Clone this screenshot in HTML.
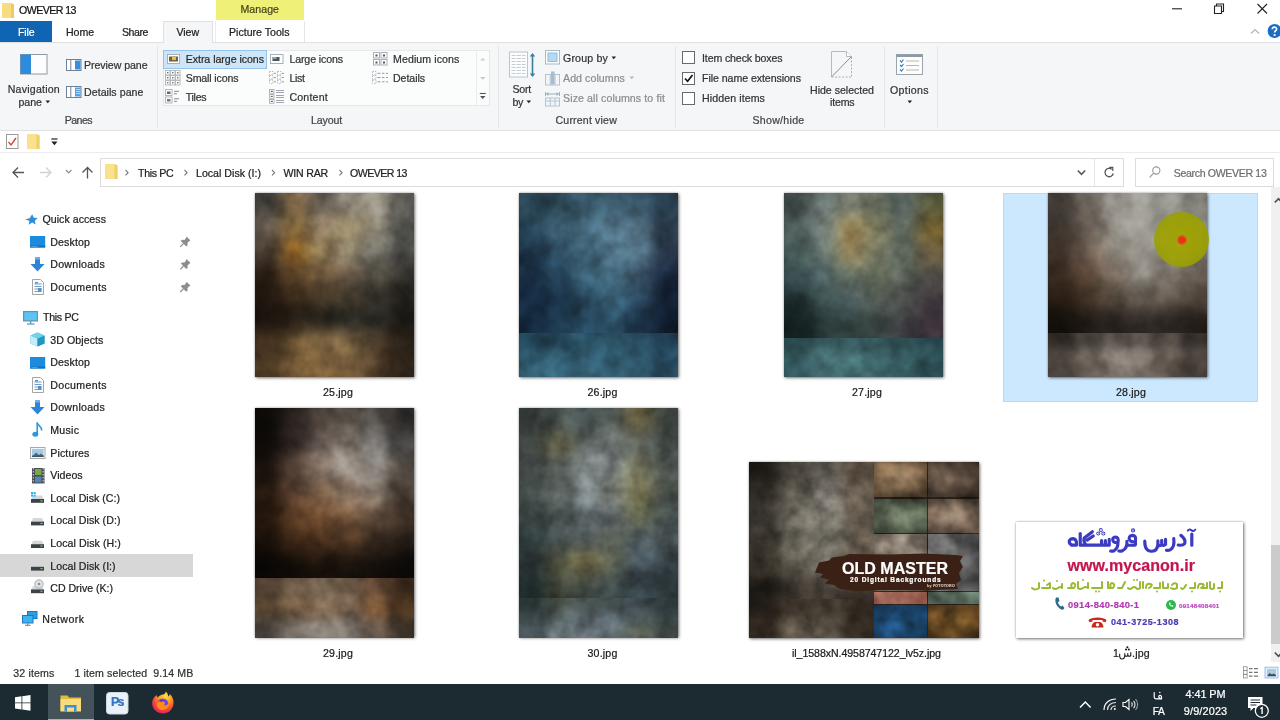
<!DOCTYPE html>
<html>
<head>
<meta charset="utf-8">
<title>OWEVER 13</title>
<style>
*{box-sizing:border-box;margin:0;padding:0}
html,body{width:1280px;height:720px;overflow:hidden;background:#fff}
body{font-family:"Liberation Sans",sans-serif;font-size:11px;color:#222;position:relative}
.a{position:absolute}
.t{position:absolute;white-space:pre;line-height:14px;height:14px;font-family:"Liberation Sans",sans-serif;-webkit-text-stroke:.22px currentColor}
svg{position:absolute;overflow:visible}
.th{position:absolute;overflow:hidden;background:#444}
.th i{position:absolute;display:block;border-radius:50%;filter:blur(6px)}
.sh{position:absolute;box-shadow:1px 1px 3px rgba(0,0,0,.5),0 0 2px rgba(0,0,0,.25)}
</style>
</head>
<body>
<svg width="0" height="0" style="left:0;top:0"><defs>
<filter id="n1" x="0" y="0" width="100%" height="100%" color-interpolation-filters="sRGB"><feTurbulence type="fractalNoise" baseFrequency="0.05 0.045" numOctaves="3" seed="3"/><feColorMatrix type="matrix" values="1.300 0 0 0 -0.15  1.300 0 0 0 -0.15  1.300 0 0 0 -0.15  0 0 0 0 1"/></filter>
<filter id="n2" x="0" y="0" width="100%" height="100%" color-interpolation-filters="sRGB"><feTurbulence type="fractalNoise" baseFrequency="0.045 0.04" numOctaves="3" seed="11"/><feColorMatrix type="matrix" values="1.300 0 0 0 -0.15  1.300 0 0 0 -0.15  1.300 0 0 0 -0.15  0 0 0 0 1"/></filter>
<filter id="n3" x="0" y="0" width="100%" height="100%" color-interpolation-filters="sRGB"><feTurbulence type="fractalNoise" baseFrequency="0.05 0.05" numOctaves="3" seed="7"/><feColorMatrix type="matrix" values="1.300 0 0 0 -0.15  1.300 0 0 0 -0.15  1.300 0 0 0 -0.15  0 0 0 0 1"/></filter>
<filter id="n4" x="0" y="0" width="100%" height="100%" color-interpolation-filters="sRGB"><feTurbulence type="fractalNoise" baseFrequency="0.05 0.045" numOctaves="3" seed="21"/><feColorMatrix type="matrix" values="1.300 0 0 0 -0.15  1.300 0 0 0 -0.15  1.300 0 0 0 -0.15  0 0 0 0 1"/></filter>
<filter id="n5" x="0" y="0" width="100%" height="100%" color-interpolation-filters="sRGB"><feTurbulence type="fractalNoise" baseFrequency="0.045 0.045" numOctaves="3" seed="5"/><feColorMatrix type="matrix" values="1.300 0 0 0 -0.15  1.300 0 0 0 -0.15  1.300 0 0 0 -0.15  0 0 0 0 1"/></filter>
<filter id="n6" x="0" y="0" width="100%" height="100%" color-interpolation-filters="sRGB"><feTurbulence type="fractalNoise" baseFrequency="0.05 0.05" numOctaves="3" seed="17"/><feColorMatrix type="matrix" values="1.300 0 0 0 -0.15  1.300 0 0 0 -0.15  1.300 0 0 0 -0.15  0 0 0 0 1"/></filter>
<filter id="n7" x="0" y="0" width="100%" height="100%" color-interpolation-filters="sRGB"><feTurbulence type="fractalNoise" baseFrequency="0.06 0.06" numOctaves="3" seed="9"/><feColorMatrix type="matrix" values="1.300 0 0 0 -0.15  1.300 0 0 0 -0.15  1.300 0 0 0 -0.15  0 0 0 0 1"/></filter>
</defs></svg>
<!-- ===== TITLE BAR ===== -->
<div class="a" style="left:216px;top:0;width:88px;height:20px;background:#eef077"></div>
<svg style="left:2px;top:3px" width="12" height="15" viewBox="0 0 12 15"><path d="M0 0h9l3 1.5V15H0z" fill="#f7dc82"/><path d="M9 0l3 1.5V15H9z" fill="#efcb5e"/></svg>
<div class="t" style="left:19.0px;top:3.13px;font-size:10.6px;letter-spacing:-0.539px;color:#111;">OWEVER 13</div>
<div class="t" style="left:240.5px;top:1.53px;font-size:10.6px;letter-spacing:0.032px;color:#47471e;">Manage</div>
<!-- window buttons -->
<svg style="left:1171px;top:0" width="110" height="21" viewBox="0 0 110 21" fill="none" stroke="#222" stroke-width="1.1">
<path d="M1 8.8h10"/>
<path d="M43.5 6h7v7.5h-7z"/><path d="M45.5 6V4h7v7.5h-2"/>
<path d="M86.5 4l9.5 9.5M96 4l-9.500 9.500"/>
</svg>
<!-- ===== TABS ===== -->
<div class="a" style="left:0;top:21px;width:52px;height:21px;background:#0f65b4"></div>
<div class="t" style="left:18.0px;top:24.83px;font-size:10.6px;letter-spacing:-0.145px;color:#fff;">File</div>
<div class="t" style="left:66.0px;top:24.83px;font-size:10.6px;letter-spacing:-0.069px;color:#222;">Home</div>
<div class="t" style="left:122.0px;top:24.83px;font-size:10.6px;letter-spacing:-0.457px;color:#222;">Share</div>
<!-- ribbon body -->
<div class="a" style="left:0;top:42px;width:1280px;height:89px;background:#f5f6f7;border-top:1px solid #dfe0e1;border-bottom:1px solid #dfe0e1"></div>
<div class="a" style="left:163px;top:21px;width:50px;height:22px;background:#f5f6f7;border:1px solid #dfe0e1;border-bottom:none"></div>
<div class="t" style="left:176.5px;top:24.83px;font-size:10.6px;letter-spacing:-0.071px;color:#222;">View</div>
<div class="a" style="left:304px;top:21px;width:1px;height:21px;background:#e6e6e6"></div>
<div class="a" style="left:215px;top:21px;width:1px;height:21px;background:#ececec"></div>
<div class="t" style="left:229.0px;top:24.83px;font-size:10.6px;letter-spacing:0.001px;color:#222;">Picture Tools</div>
<!-- collapse ^ and help -->
<svg style="left:1250px;top:24px" width="30" height="16" viewBox="0 0 30 16"><path d="M1 9.5l4-4 4 4" fill="none" stroke="#b5b5b5" stroke-width="1.2"/><circle cx="24.600" cy="7" r="7" fill="#1a6dc2"/><path d="M22.300 5.200c0-2.800 4.400-2.600 4.300-.2 0 1.600-2 1.700-2 3.500" fill="none" stroke="#fff" stroke-width="1.700"/><circle cx="24.600" cy="11" r="1.100" fill="#fff"/></svg>
<!-- ribbon separators -->
<div class="a" style="left:157px;top:46px;width:1px;height:82px;background:#e4e5e6"></div>
<div class="a" style="left:498px;top:46px;width:1px;height:82px;background:#e4e5e6"></div>
<div class="a" style="left:675px;top:46px;width:1px;height:82px;background:#e4e5e6"></div>
<div class="a" style="left:884px;top:46px;width:1px;height:82px;background:#e4e5e6"></div>
<div class="a" style="left:937px;top:46px;width:1px;height:82px;background:#e4e5e6"></div>
<!-- ===== QAT ===== -->
<div class="a" style="left:0;top:131px;width:1280px;height:22px;background:#fff;border-bottom:1px solid #ececec"></div>
<!-- ===== RIBBON: PANES ===== -->
<svg style="left:20px;top:54px" width="28" height="21" viewBox="0 0 28 21"><rect x="0.500" y="0.500" width="26.500" height="19.500" fill="#fdfdfd" stroke="#8b98a6"/><rect x="0.500" y="0.500" width="10.500" height="19.500" fill="#2e8ada"/></svg>
<div class="t" style="left:7.7px;top:82.13px;font-size:10.6px;letter-spacing:0.221px;color:#333;">Navigation</div>
<div class="t" style="left:18.5px;top:94.53px;font-size:10.6px;letter-spacing:-0.020px;color:#333;">pane</div>
<svg style="left:45px;top:100px" width="6" height="4" viewBox="0 0 6 4"><path d="M0.500 0.500h4.600L2.800 3.200z" fill="#222"/></svg>
<svg style="left:66px;top:59px" width="16" height="12" viewBox="0 0 16 12"><rect x="0.500" y="0.500" width="14.500" height="11" fill="#fff" stroke="#6f8295"/><rect x="9" y="1.500" width="5.500" height="9" fill="#3a8fdc"/><path d="M4.800 1v10" stroke="#6f8295"/></svg>
<div class="t" style="left:84.0px;top:57.73px;font-size:10.6px;letter-spacing:-0.061px;color:#333;">Preview pane</div>
<svg style="left:66px;top:86px" width="16" height="12" viewBox="0 0 16 12"><rect x="0.500" y="0.500" width="14.500" height="11" fill="#fff" stroke="#6f8295"/><rect x="9" y="1.500" width="5.500" height="9" fill="#5aa0e0"/><path d="M4.800 1v10" stroke="#6f8295"/><path d="M10 3.500h4M10 5.500h4M10 7.500h4" stroke="#d8e8f8" stroke-width=".8"/></svg>
<div class="t" style="left:84.0px;top:84.83px;font-size:10.6px;letter-spacing:0.048px;color:#333;">Details pane</div>
<div class="t" style="left:64.7px;top:113.03px;font-size:10.6px;letter-spacing:-0.551px;color:#444;">Panes</div>
<!-- ===== RIBBON: LAYOUT ===== -->
<div class="a" style="left:163px;top:50px;width:327px;height:56px;background:#fbfcfc;border:1px solid #e6e7e8"></div>
<div class="a" style="left:476px;top:51px;width:1px;height:54px;background:#ececec"></div>
<div class="a" style="left:163px;top:50px;width:104px;height:19px;background:#cde5f7;border:1px solid #94c3ea"></div>
<!-- gallery icons -->
<svg style="left:167px;top:54px" width="13" height="10" viewBox="0 0 13 10"><rect x="0.500" y="0.500" width="12" height="9" fill="#fff" stroke="#a8b0b8"/><rect x="2" y="2.500" width="9" height="5" fill="#6a6440"/><rect x="5" y="3" width="4" height="3" fill="#e8c040"/></svg>
<svg style="left:270px;top:54px" width="14" height="10" viewBox="0 0 14 10"><rect x="0.500" y="0.500" width="12.500" height="9" fill="#fff" stroke="#a8b0b8"/><rect x="2.500" y="3" width="7" height="4" fill="#4a5560"/><rect x="2.500" y="3" width="4" height="2" fill="#8aa"/></svg>
<svg style="left:373px;top:52px" width="15" height="14" viewBox="0 0 15 14"><g fill="#fff" stroke="#a8b0b8"><rect x="0.500" y="0.500" width="6" height="5.500"/><rect x="8" y="0.500" width="6" height="5.500"/><rect x="0.500" y="7.500" width="6" height="5.500"/><rect x="8" y="7.500" width="6" height="5.500"/></g><g fill="#555"><rect x="2.500" y="2.500" width="2" height="2"/><rect x="10" y="2.500" width="2" height="2"/><rect x="2.500" y="9.500" width="2" height="2"/><rect x="10" y="9.500" width="2" height="2"/></g></svg>
<svg style="left:165px;top:70px" width="16" height="16" viewBox="0 0 16 16"><g fill="#fff" stroke="#b0b6bc" stroke-width=".9"><rect x="0.500" y="0.500" width="4.500" height="4.500"/><rect x="5.500" y="0.500" width="4.500" height="4.500"/><rect x="10.500" y="0.500" width="4.500" height="4.500"/><rect x="0.500" y="5.500" width="4.500" height="4.500"/><rect x="5.500" y="5.500" width="4.500" height="4.500"/><rect x="10.500" y="5.500" width="4.500" height="4.500"/><rect x="0.500" y="10.500" width="4.500" height="4.500"/><rect x="5.500" y="10.500" width="4.500" height="4.500"/><rect x="10.500" y="10.500" width="4.500" height="4.500"/></g><g fill="#555"><circle cx="2.800" cy="2.800" r=".8"/><circle cx="7.800" cy="2.800" r=".8"/><circle cx="12.800" cy="2.800" r=".8"/><circle cx="2.800" cy="7.800" r=".8"/><circle cx="7.800" cy="7.800" r=".8"/><circle cx="12.800" cy="7.800" r=".8"/><circle cx="2.800" cy="12.800" r=".8"/><circle cx="7.800" cy="12.800" r=".8"/><circle cx="12.800" cy="12.800" r=".8"/></g></svg>
<svg style="left:269px;top:71px" width="16" height="13" viewBox="0 0 16 13"><g fill="#fff" stroke="#b0b6bc" stroke-width=".9" stroke-dasharray="1.500 1"><rect x="0.500" y="0.500" width="3.500" height="3.500"/><rect x="0.500" y="4.700" width="3.500" height="3.500"/><rect x="0.500" y="9" width="3.500" height="3.500"/><rect x="8.500" y="0.500" width="3.500" height="3.500"/><rect x="8.500" y="4.700" width="3.500" height="3.500"/><rect x="8.500" y="9" width="3.500" height="3.500"/></g><path d="M5 2.300h2M5 6.500h2M5 10.800h2M13 2.300h2M13 6.500h2M13 10.800h2" stroke="#999"/></svg>
<svg style="left:372px;top:71px" width="16" height="13" viewBox="0 0 16 13"><g fill="#fff" stroke="#b0b6bc" stroke-width=".9" stroke-dasharray="1.500 1"><rect x="0.500" y="0.500" width="3.500" height="3.500"/><rect x="0.500" y="4.700" width="3.500" height="3.500"/><rect x="0.500" y="9" width="3.500" height="3.500"/></g><path d="M5.500 2.300h3M10 2.300h2.500M14 2.300h2M5.500 6.500h3M10 6.500h2.500M14 6.500h2M5.500 10.800h3M10 10.800h2.500M14 10.800h2" stroke="#999"/></svg>
<svg style="left:165px;top:89px" width="16" height="15" viewBox="0 0 16 15"><g fill="#fff" stroke="#a8b0b8" stroke-width=".9"><rect x="0.500" y="0.500" width="6.500" height="6"/><rect x="0.500" y="8" width="6.500" height="6"/></g><rect x="2" y="2.500" width="3.500" height="2.500" fill="#667"/><rect x="2" y="10" width="3.500" height="2.500" fill="#685"/><path d="M9 2.300h5M9 4.800h3M9 9.800h5M9 12.300h3" stroke="#889"/></svg>
<svg style="left:269px;top:89px" width="16" height="15" viewBox="0 0 16 15"><g fill="#fff" stroke="#a8b0b8" stroke-width=".9"><rect x="0.500" y="0.500" width="4.500" height="3.800"/><rect x="0.500" y="5.500" width="4.500" height="3.800"/><rect x="0.500" y="10.500" width="4.500" height="3.800"/></g><g fill="#666"><rect x="1.800" y="1.800" width="2" height="1.200"/><rect x="1.800" y="6.800" width="2" height="1.200"/><rect x="1.800" y="11.800" width="2" height="1.200"/></g><path d="M7 1.500h8M7 3.500h8M7 6.500h8M7 8.500h8M7 11.500h8M7 13.500h8" stroke="#99a" stroke-width=".9"/></svg>
<div class="t" style="left:185.7px;top:52.13px;font-size:10.6px;letter-spacing:-0.038px;color:#2a2a2a;">Extra large icons</div>
<div class="t" style="left:185.7px;top:71.03px;font-size:10.6px;letter-spacing:-0.127px;color:#333;">Small icons</div>
<div class="t" style="left:185.7px;top:89.63px;font-size:10.6px;letter-spacing:-0.258px;color:#333;">Tiles</div>
<div class="t" style="left:289.4px;top:52.13px;font-size:10.6px;letter-spacing:-0.109px;color:#333;">Large icons</div>
<div class="t" style="left:289.4px;top:71.03px;font-size:10.6px;letter-spacing:-0.349px;color:#333;">List</div>
<div class="t" style="left:289.4px;top:89.63px;font-size:10.6px;letter-spacing:0.211px;color:#333;">Content</div>
<div class="t" style="left:393.0px;top:52.13px;font-size:10.6px;letter-spacing:0.092px;color:#333;">Medium icons</div>
<div class="t" style="left:393.0px;top:71.03px;font-size:10.6px;letter-spacing:-0.057px;color:#333;">Details</div>
<div class="t" style="left:311.0px;top:113.23px;font-size:10.6px;letter-spacing:-0.138px;color:#444;">Layout</div>
<!-- gallery scroll arrows -->
<svg style="left:479px;top:55px" width="8" height="46" viewBox="0 0 8 46"><path d="M1 5.500h5.500L3.700 2.800z" fill="#d0d0d0"/><path d="M1 22h5.500L3.700 24.800z" fill="#c8c8c8"/><path d="M0.800 38.500h6" stroke="#555" stroke-width="1.100"/><path d="M1 41h5.500L3.700 44z" fill="#555"/></svg>
<!-- ===== RIBBON: CURRENT VIEW ===== -->
<svg style="left:509px;top:51px" width="28" height="28" viewBox="0 0 28 28"><rect x="0.500" y="1" width="18" height="25" fill="#fdfdfd" stroke="#b8c4ce"/><path d="M2.500 4.500h14M2.500 7.500h14M2.500 10.500h14M2.500 13.500h14M2.500 16.500h14M2.500 19.500h14M2.500 22.500h14" stroke="#c3cdd5" stroke-width="1.200"/><path d="M7 2v23M12.500 2v23" stroke="#fdfdfd" stroke-width="1"/><path d="M23.500 3.500v21" stroke="#3b7f9c" stroke-width="1.600"/><path d="M20.800 5.500l2.700-3.500 2.700 3.500zM20.800 22.500l2.700 3.500 2.700-3.500z" fill="#3b7f9c"/></svg>
<div class="t" style="left:512.5px;top:82.13px;font-size:10.6px;letter-spacing:-0.235px;color:#333;">Sort</div>
<div class="t" style="left:512.5px;top:94.53px;font-size:10.6px;letter-spacing:-0.348px;color:#333;">by</div>
<svg style="left:526px;top:100px" width="6" height="4" viewBox="0 0 6 4"><path d="M0.500 0.500h4.600L2.800 3.200z" fill="#222"/></svg>
<svg style="left:545px;top:50px" width="16" height="15" viewBox="0 0 16 15"><rect x="0.500" y="0.500" width="14" height="13.500" fill="#fdfdfd" stroke="#a9b9c6"/><rect x="3" y="3" width="9" height="8.500" fill="#b5d9f1" stroke="#8dbfe0"/></svg>
<div class="t" style="left:563.0px;top:50.53px;font-size:10.6px;letter-spacing:0.175px;color:#333;">Group by</div>
<svg style="left:611px;top:56px" width="6" height="4" viewBox="0 0 6 4"><path d="M0.500 0.500h4.600L2.800 3.200z" fill="#222"/></svg>
<svg style="left:545px;top:71px" width="16" height="15" viewBox="0 0 16 15"><rect x="0.500" y="3.500" width="14" height="10.500" fill="#f3f6f9" stroke="#b4c3d0"/><path d="M5.200 3.500v10.500M10 3.500v10.500" stroke="#b4c3d0"/><rect x="6" y="0.500" width="3.500" height="13" fill="#a8bccd"/></svg>
<div class="t" style="left:563.0px;top:70.63px;font-size:10.6px;letter-spacing:0.066px;color:#8d8d8d;">Add columns</div>
<svg style="left:629px;top:76px" width="6" height="4" viewBox="0 0 6 4"><path d="M0.500 0.500h4.600L2.800 3.200z" fill="#b5b5b5"/></svg>
<svg style="left:545px;top:91px" width="16" height="16" viewBox="0 0 16 16"><path d="M0.500 1v4M14.500 1v4M1.500 3h12" stroke="#9cb0c2" fill="none"/><path d="M1 3l2.500-2v4zM14 3l-2.500-2v4z" fill="#9cb0c2"/><rect x="0.500" y="7" width="14" height="8" fill="#f3f6f9" stroke="#b4c3d0"/><path d="M5.200 7v8M10 7v8M0.500 10h14" stroke="#b4c3d0"/></svg>
<div class="t" style="left:563.0px;top:91.33px;font-size:10.6px;letter-spacing:0.106px;color:#8d8d8d;">Size all columns to fit</div>
<div class="t" style="left:555.5px;top:113.23px;font-size:10.6px;letter-spacing:0.167px;color:#444;">Current view</div>
<!-- ===== RIBBON: SHOW/HIDE ===== -->
<div class="a" style="left:682px;top:51px;width:13px;height:13px;background:#fff;border:1px solid #6a6a6a"></div>
<div class="a" style="left:682px;top:71.500px;width:13px;height:13px;background:#fff;border:1px solid #6a6a6a"></div>
<div class="a" style="left:682px;top:92px;width:13px;height:13px;background:#fff;border:1px solid #6a6a6a"></div>
<svg style="left:684px;top:73.500px" width="10" height="9" viewBox="0 0 10 9"><path d="M1 4.500l2.600 2.800L8.500 1" fill="none" stroke="#111" stroke-width="1.700"/></svg>
<div class="t" style="left:702.0px;top:50.53px;font-size:10.6px;letter-spacing:-0.124px;color:#333;">Item check boxes</div>
<div class="t" style="left:702.0px;top:70.63px;font-size:10.6px;letter-spacing:-0.058px;color:#333;">File name extensions</div>
<div class="t" style="left:702.0px;top:91.33px;font-size:10.6px;letter-spacing:0.095px;color:#333;">Hidden items</div>
<div class="t" style="left:752.5px;top:113.23px;font-size:10.6px;letter-spacing:0.277px;color:#444;">Show/hide</div>
<svg style="left:831px;top:51px" width="22" height="27" viewBox="0 0 22 27"><path d="M0.500 0.500h15l5 5v0" fill="none" stroke="#b9b9b9"/><path d="M0.500 0.500v25.500" stroke="#b9b9b9"/><path d="M15.500 0.500v5h5" fill="#fff" stroke="#b9b9b9"/><path d="M0.500 26L20.500 5.500" stroke="#8c8c8c" stroke-width="1"/><path d="M20.500 6v20M0.500 26h20" stroke="#b0b0b0" stroke-dasharray="2 1.500" fill="none"/></svg>
<div class="t" style="left:810.0px;top:82.93px;font-size:10.6px;letter-spacing:-0.018px;color:#333;">Hide selected</div>
<div class="t" style="left:830.0px;top:94.83px;font-size:10.6px;letter-spacing:-0.165px;color:#333;">items</div>
<!-- ===== RIBBON: OPTIONS ===== -->
<svg style="left:896px;top:54px" width="27" height="21" viewBox="0 0 27 21"><rect x="0.500" y="0.500" width="26" height="20" fill="#fdfdfd" stroke="#9aa4ad"/><rect x="0.500" y="0.500" width="26" height="2.500" fill="#8e99a3"/><path d="M10 7h13M10 11.500h13M10 16h13" stroke="#b9b9a0" stroke-width="1.200"/><path d="M4 6.500l1.500 1.500 2-2.500M4 11l1.500 1.500 2-2.500M4 15.500l1.500 1.500 2-2.500" fill="none" stroke="#3d7fc0" stroke-width="1.200"/></svg>
<div class="t" style="left:890.0px;top:82.93px;font-size:10.6px;letter-spacing:0.353px;color:#333;">Options</div>
<svg style="left:906.500px;top:100px" width="6" height="4" viewBox="0 0 6 4"><path d="M0.500 0.500h4.600L2.800 3.200z" fill="#222"/></svg>
<!-- ===== QAT icons ===== -->
<svg style="left:6px;top:134px" width="13" height="15" viewBox="0 0 13 15"><rect x="0.500" y="0.500" width="11.500" height="14" fill="#fdfdfd" stroke="#9a9a9a"/><path d="M2.500 8l2.500 3 5-7" fill="none" stroke="#d0432f" stroke-width="1.300"/></svg>
<svg style="left:27px;top:134px" width="13" height="15" viewBox="0 0 13 15"><path d="M0 0h9.500l3 1.500V15H0z" fill="#f9e28e"/><path d="M9.500 0l3 1.500V15h-3z" fill="#f0cf66"/></svg>
<svg style="left:51px;top:138px" width="7" height="8" viewBox="0 0 7 8"><path d="M0.300 1h6.200" stroke="#222" stroke-width="1.200"/><path d="M0.300 3.500h6.200L3.400 7.300z" fill="#222"/></svg>
<!-- ===== NAV ARROWS ===== -->
<svg style="left:12px;top:166px" width="84" height="14" viewBox="0 0 84 14" fill="none" stroke-width="1.300">
<path d="M12 6.500H1.500M6 1.500l-5 5 5 5" stroke="#555"/>
<path d="M28 6.500h10.500M34 1.500l5 5-5 5" stroke="#d2d2d2"/>
<path d="M54 4l2.700 2.800L59.400 4" stroke="#8a8a8a" stroke-width="1.200"/>
<path d="M75.500 12.500V2M70.500 6.500l5-5 5 5" stroke="#555"/>
</svg>
<!-- ===== ADDRESS BOX ===== -->
<div class="a" style="left:100px;top:158px;width:1024px;height:29px;background:#fff;border:1px solid #dcdcdc"></div>
<div class="a" style="left:1094px;top:159px;width:1px;height:27px;background:#e4e4e4"></div>
<svg style="left:104.500px;top:164px" width="13" height="15" viewBox="0 0 13 15"><path d="M0 0h9.500l3 1.500V15H0z" fill="#f9e28e"/><path d="M9.500 0l3 1.500V15h-3z" fill="#f0cf66"/></svg>
<svg style="left:124px;top:169px" width="230" height="8" viewBox="0 0 230 8" fill="none" stroke="#777" stroke-width="1.100"><path d="M1.500 1l2.600 2.700L1.500 6.400M60.500 1l2.600 2.700-2.600 2.700M148 1l2.600 2.700-2.600 2.700M215.500 1l2.600 2.700-2.600 2.700"/></svg>
<div class="t" style="left:138.0px;top:165.53px;font-size:10.6px;letter-spacing:-0.342px;color:#222;">This PC</div>
<div class="t" style="left:196.0px;top:165.53px;font-size:10.6px;letter-spacing:0.014px;color:#222;">Local Disk (I:)</div>
<div class="t" style="left:283.5px;top:165.53px;font-size:10.6px;letter-spacing:-0.204px;color:#222;">WIN RAR</div>
<div class="t" style="left:350.0px;top:165.53px;font-size:10.6px;letter-spacing:-0.539px;color:#222;">OWEVER 13</div>
<svg style="left:1077px;top:169px" width="10" height="8" viewBox="0 0 10 8"><path d="M0.800 1.500l3.700 3.800 3.700-3.800" fill="none" stroke="#555" stroke-width="1.500"/></svg>
<svg style="left:1104px;top:166.500px" width="11" height="12" viewBox="0 0 11 12"><path d="M7.800 2.200A4.200 4.200 0 1 0 9.300 6.500" fill="none" stroke="#555" stroke-width="1.300"/><path d="M5.200 0.300h3.600v3.600" fill="none" stroke="#555" stroke-width="1.200"/></svg>
<!-- ===== SEARCH BOX ===== -->
<div class="a" style="left:1135px;top:158px;width:139px;height:29px;background:#fff;border:1px solid #dcdcdc"></div>
<svg style="left:1149px;top:166px" width="12" height="12" viewBox="0 0 12 12"><circle cx="7.300" cy="4.500" r="3.600" fill="none" stroke="#9a9a9a" stroke-width="1.100"/><path d="M4.700 7.200L0.700 11.300" stroke="#9a9a9a" stroke-width="1.200"/></svg>
<div class="t" style="left:1173.8px;top:165.53px;font-size:10.6px;letter-spacing:-0.355px;color:#6e6e6e;">Search OWEVER 13</div>
<!-- ===== NAV PANE ===== -->
<div class="a" style="left:0;top:554px;width:192.500px;height:22.500px;background:#d7d7d7"></div>
<!-- quick access star -->
<svg style="left:25px;top:213.500px" width="13" height="12" viewBox="0 0 13 12"><path d="M7.200 0.200l1.600 3.500 3.800.4-2.800 2.600.8 3.800L7.200 8.600 3.600 10.800l.9-3.900L0.300 5.300l4.300-1z" fill="#2f8ed9"/></svg>
<div class="t" style="left:42.5px;top:212.23px;font-size:10.6px;letter-spacing:0.039px;color:#222;">Quick access</div>
<!-- desktop (qa) -->
<svg style="left:30px;top:236px" width="16" height="12" viewBox="0 0 16 12"><rect x="0" y="0" width="15.200" height="11.500" fill="#1b8be0"/><rect x="0" y="9.500" width="15.200" height="2" fill="#1470bd"/><path d="M1.500 10.500h6" stroke="#9fd0f5" stroke-width=".7" stroke-dasharray="1 .6"/></svg>
<div class="t" style="left:50.3px;top:234.73px;font-size:10.6px;letter-spacing:0.116px;color:#222;">Desktop</div>
<!-- downloads (qa) -->
<svg style="left:30px;top:256.500px" width="15" height="15" viewBox="0 0 15 15"><path d="M5 0h5v7h4.500L7.500 14.500 0.500 7H5z" fill="#2d85d8"/><path d="M5 0h5v2.500H5z" fill="#6fb0ea"/></svg>
<div class="t" style="left:50.3px;top:257.03px;font-size:10.6px;letter-spacing:0.251px;color:#222;">Downloads</div>
<!-- documents (qa) -->
<svg style="left:31.500px;top:279px" width="12" height="16" viewBox="0 0 12 16"><path d="M0.500 0.500h8l3 3v12h-11z" fill="#fbfbfb" stroke="#a5a5a5"/><path d="M2.500 5h7M2.500 7.500h7M2.500 10h7M2.500 12.500h7" stroke="#6f9fc8" stroke-width="1"/><rect x="6" y="9" width="3.500" height="3.500" fill="#5b8fc0"/><rect x="3" y="3" width="3" height="1.500" fill="#5b8fc0"/></svg>
<div class="t" style="left:50.3px;top:279.73px;font-size:10.6px;letter-spacing:0.321px;color:#222;">Documents</div>
<!-- pins -->
<svg style="left:180px;top:236px" width="11" height="57" viewBox="0 0 11 57" fill="#8d8d8d"><g id="pin"><path d="M6.500 0.500l4 4-1.200.6-1.800 1.800.1 2.400-1.300 1.200-5.500-5.500 1.300-1.200 2.400.1L6 2z"/><path d="M3.600 7.300L0.300 10.800" stroke="#8d8d8d" stroke-width="1.200"/></g><use href="#pin" y="22.600"/><use href="#pin" y="45.200"/></svg>
<!-- this pc -->
<svg style="left:22.500px;top:310.500px" width="16" height="14" viewBox="0 0 16 14"><rect x="0.500" y="0.500" width="14" height="9.500" fill="#4db4ea" stroke="#7a8b99"/><rect x="1.500" y="1.500" width="12" height="7.500" fill="#5cc3f2"/><path d="M4 13h7.500" stroke="#5ea7d6" stroke-width="1.400"/><path d="M7.700 10v3" stroke="#8a99a6" stroke-width="1.500"/></svg>
<div class="t" style="left:43.0px;top:309.93px;font-size:10.6px;letter-spacing:-0.314px;color:#222;">This PC</div>
<!-- 3d objects -->
<svg style="left:30px;top:331.500px" width="15" height="15" viewBox="0 0 15 15"><path d="M0.500 3.500l7-3 7 3v8l-7 3-7-3z" fill="#35b8d8"/><path d="M0.500 3.500l7 3v8l-7-3z" fill="#c5ecf6"/><path d="M7.500 6.500l7-3v8l-7 3z" fill="#1f98bd"/><path d="M0.500 3.500l7-3 7 3-7 3z" fill="#6dd3ea"/></svg>
<div class="t" style="left:50.3px;top:332.53px;font-size:10.6px;letter-spacing:0.077px;color:#222;">3D Objects</div>
<svg style="left:30px;top:356.500px" width="16" height="12" viewBox="0 0 16 12"><rect x="0" y="0" width="15.200" height="11.500" fill="#1b8be0"/><rect x="0" y="9.500" width="15.200" height="2" fill="#1470bd"/><path d="M1.500 10.500h6" stroke="#9fd0f5" stroke-width=".7" stroke-dasharray="1 .6"/></svg>
<div class="t" style="left:50.3px;top:355.13px;font-size:10.6px;letter-spacing:0.116px;color:#222;">Desktop</div>
<svg style="left:31.500px;top:377px" width="12" height="16" viewBox="0 0 12 16"><path d="M0.500 0.500h8l3 3v12h-11z" fill="#fbfbfb" stroke="#a5a5a5"/><path d="M2.500 5h7M2.500 7.500h7M2.500 10h7M2.500 12.500h7" stroke="#6f9fc8" stroke-width="1"/><rect x="6" y="9" width="3.500" height="3.500" fill="#5b8fc0"/><rect x="3" y="3" width="3" height="1.500" fill="#5b8fc0"/></svg>
<div class="t" style="left:50.3px;top:377.73px;font-size:10.6px;letter-spacing:0.321px;color:#222;">Documents</div>
<svg style="left:30px;top:399.500px" width="15" height="15" viewBox="0 0 15 15"><path d="M5 0h5v7h4.500L7.500 14.500 0.500 7H5z" fill="#2d85d8"/><path d="M5 0h5v2.500H5z" fill="#6fb0ea"/></svg>
<div class="t" style="left:50.3px;top:400.33px;font-size:10.6px;letter-spacing:0.251px;color:#222;">Downloads</div>
<!-- music -->
<svg style="left:32px;top:421.500px" width="11" height="16" viewBox="0 0 11 16"><path d="M5.200 0.500v11" stroke="#2f96dc" stroke-width="1.600"/><path d="M5.200 0.500c.5 3.500 5 3.500 4.500 8" fill="none" stroke="#2f96dc" stroke-width="1.600"/><ellipse cx="3.300" cy="12.300" rx="3" ry="2.500" fill="#2f96dc"/></svg>
<div class="t" style="left:50.3px;top:422.93px;font-size:10.6px;letter-spacing:0.244px;color:#222;">Music</div>
<!-- pictures -->
<svg style="left:30px;top:446.500px" width="16" height="12" viewBox="0 0 16 12"><rect x="0.500" y="0.500" width="14.500" height="11" fill="#f4f4f4" stroke="#a9a9a9"/><rect x="2" y="2" width="11.500" height="8" fill="#9ecbe8"/><path d="M2 10l4-4.500 3 2.500 2-1.500 2.500 2V10z" fill="#566a78"/><path d="M2 10h11.500V8.500H2z" fill="#3f5563"/></svg>
<div class="t" style="left:50.3px;top:445.53px;font-size:10.6px;letter-spacing:0.114px;color:#222;">Pictures</div>
<!-- videos -->
<svg style="left:31.500px;top:467.500px" width="13" height="16" viewBox="0 0 13 16"><rect x="0" y="0" width="12.500" height="15.500" fill="#4a4e55"/><rect x="3" y="1" width="6.500" height="6" fill="#7aa848"/><rect x="3" y="8.500" width="6.500" height="6" fill="#4f86b5"/><path d="M1.300 0v16M11.200 0v16" stroke="#d8d8d8" stroke-width="1" stroke-dasharray="1.500 1.500"/></svg>
<div class="t" style="left:50.3px;top:468.13px;font-size:10.6px;letter-spacing:0.030px;color:#222;">Videos</div>
<!-- drives -->
<svg style="left:30px;top:489px" width="16" height="102" viewBox="0 0 16 102">
<g id="drv"><path d="M1.500 10l1.500-3.500h9l1.500 3.500z" fill="#d5d8db"/><rect x="1" y="10" width="13" height="3.800" fill="#3c4248"/><rect x="10.500" y="11.300" width="2" height="1" fill="#8fe08a"/></g>
<g fill="#26b5e8"><rect x="1" y="3" width="2" height="2"/><rect x="3.600" y="3" width="2" height="2"/><rect x="1" y="5.600" width="2" height="2"/><rect x="3.600" y="5.600" width="2" height="2"/></g>
<use href="#drv" y="22.600"/><use href="#drv" y="45.200"/><use href="#drv" y="67.800"/>
<use href="#drv" y="90.400"/><circle cx="9" cy="95" r="4.200" fill="#dfe2e5" stroke="#9aa0a6" stroke-width=".8"/><circle cx="9" cy="95" r="1.300" fill="#8a9097"/><rect x="1" y="100.400" width="13" height="0" fill="#3c4248"/>
</svg>
<div class="t" style="left:50.3px;top:490.73px;font-size:10.6px;letter-spacing:0.013px;color:#222;">Local Disk (C:)</div>
<div class="t" style="left:50.3px;top:513.33px;font-size:10.6px;letter-spacing:0.047px;color:#222;">Local Disk (D:)</div>
<div class="t" style="left:50.3px;top:535.93px;font-size:10.6px;letter-spacing:0.080px;color:#222;">Local Disk (H:)</div>
<div class="t" style="left:50.3px;top:558.53px;font-size:10.6px;letter-spacing:0.041px;color:#222;">Local Disk (I:)</div>
<div class="t" style="left:50.3px;top:581.13px;font-size:10.6px;letter-spacing:-0.024px;color:#222;">CD Drive (K:)</div>
<!-- network -->
<svg style="left:22px;top:610.500px" width="16" height="15" viewBox="0 0 16 15"><rect x="5.500" y="0.500" width="9.500" height="7" fill="#2f9be0" stroke="#1e78c0"/><rect x="0.500" y="4.500" width="10.500" height="7.500" fill="#3fb0f0" stroke="#1e78c0"/><path d="M3 14.300h5.500" stroke="#7f8c99" stroke-width="1.200"/><path d="M5.700 12v2.300" stroke="#7f8c99" stroke-width="1.200"/></svg>
<div class="t" style="left:42.3px;top:611.73px;font-size:10.6px;letter-spacing:0.503px;color:#222;">Network</div>
<!-- ===== CONTENT AREA ===== -->
<div class="a" style="left:1003px;top:193px;width:255px;height:208.500px;background:#cce8ff;border:1px solid #bcd9f1"></div>
<!-- shadows -->
<div class="sh" style="left:255px;top:193px;width:159px;height:184px"></div>
<div class="sh" style="left:519px;top:193px;width:159px;height:184px"></div>
<div class="sh" style="left:784px;top:193px;width:159px;height:184px"></div>
<div class="sh" style="left:1048px;top:193px;width:159px;height:184px"></div>
<div class="sh" style="left:255px;top:408.400px;width:159px;height:229.100px"></div>
<div class="sh" style="left:519px;top:408.400px;width:159px;height:229.100px"></div>
<div class="sh" style="left:749px;top:461.500px;width:229.500px;height:176px"></div>
<div class="sh" style="left:1016px;top:522px;width:227px;height:116px"></div>
<!-- 25.jpg -->
<div class="th" style="left:255px;top:193px;width:159px;height:184px"><svg style="left:0;top:0" width="159" height="184" viewBox="0 0 159 184"><defs><filter id="gb1" x="-50%" y="-50%" width="200%" height="200%" color-interpolation-filters="sRGB"><feGaussianBlur stdDeviation="8.0"/></filter></defs><g filter="url(#gb1)"><rect x="-26.5" y="-26.5" width="53.6" height="50.1" fill="#3e3c38"/><rect x="26.5" y="-26.5" width="27.1" height="50.1" fill="#7c6444"/><rect x="53.0" y="-26.5" width="27.1" height="50.1" fill="#645c52"/><rect x="79.5" y="-26.5" width="27.1" height="50.1" fill="#847c70"/><rect x="106.0" y="-26.5" width="27.1" height="50.1" fill="#aaa494"/><rect x="132.5" y="-26.5" width="53.6" height="50.1" fill="#5c5a54"/><rect x="-26.5" y="23.0" width="53.6" height="23.6" fill="#584e44"/><rect x="26.5" y="23.0" width="27.1" height="23.6" fill="#886c3e"/><rect x="53.0" y="23.0" width="27.1" height="23.6" fill="#806e58"/><rect x="79.5" y="23.0" width="27.1" height="23.6" fill="#a08e6a"/><rect x="106.0" y="23.0" width="27.1" height="23.6" fill="#98927f"/><rect x="132.5" y="23.0" width="53.6" height="23.6" fill="#555550"/><rect x="-26.5" y="46.0" width="53.6" height="23.6" fill="#463c32"/><rect x="26.5" y="46.0" width="27.1" height="23.6" fill="#84581c"/><rect x="53.0" y="46.0" width="27.1" height="23.6" fill="#96825a"/><rect x="79.5" y="46.0" width="27.1" height="23.6" fill="#8a8068"/><rect x="106.0" y="46.0" width="27.1" height="23.6" fill="#6e6c64"/><rect x="132.5" y="46.0" width="53.6" height="23.6" fill="#4a4a46"/><rect x="-26.5" y="69.0" width="53.6" height="23.6" fill="#2a1e14"/><rect x="26.5" y="69.0" width="27.1" height="23.6" fill="#5c4428"/><rect x="53.0" y="69.0" width="27.1" height="23.6" fill="#6e563a"/><rect x="79.5" y="69.0" width="27.1" height="23.6" fill="#625444"/><rect x="106.0" y="69.0" width="27.1" height="23.6" fill="#524c42"/><rect x="132.5" y="69.0" width="53.6" height="23.6" fill="#34322c"/><rect x="-26.5" y="92.0" width="53.6" height="23.6" fill="#20160e"/><rect x="26.5" y="92.0" width="27.1" height="23.6" fill="#382818"/><rect x="53.0" y="92.0" width="27.1" height="23.6" fill="#463826"/><rect x="79.5" y="92.0" width="27.1" height="23.6" fill="#42392b"/><rect x="106.0" y="92.0" width="27.1" height="23.6" fill="#38342c"/><rect x="132.5" y="92.0" width="53.6" height="23.6" fill="#26241e"/><rect x="-26.5" y="115.0" width="53.6" height="23.6" fill="#18120c"/><rect x="26.5" y="115.0" width="27.1" height="23.6" fill="#241c14"/><rect x="53.0" y="115.0" width="27.1" height="23.6" fill="#28241c"/><rect x="79.5" y="115.0" width="27.1" height="23.6" fill="#2a2a24"/><rect x="106.0" y="115.0" width="27.1" height="23.6" fill="#242420"/><rect x="132.5" y="115.0" width="53.6" height="23.6" fill="#1a1814"/><rect x="-26.5" y="138.0" width="53.6" height="23.6" fill="#3a2a1a"/><rect x="26.5" y="138.0" width="27.1" height="23.6" fill="#665030"/><rect x="53.0" y="138.0" width="27.1" height="23.6" fill="#846a44"/><rect x="79.5" y="138.0" width="27.1" height="23.6" fill="#786242"/><rect x="106.0" y="138.0" width="27.1" height="23.6" fill="#54422e"/><rect x="132.5" y="138.0" width="53.6" height="23.6" fill="#2a2016"/><rect x="-26.5" y="161.0" width="53.6" height="50.1" fill="#4a3822"/><rect x="26.5" y="161.0" width="27.1" height="50.1" fill="#765a36"/><rect x="53.0" y="161.0" width="27.1" height="50.1" fill="#886a40"/><rect x="79.5" y="161.0" width="27.1" height="50.1" fill="#745a3a"/><rect x="106.0" y="161.0" width="27.1" height="50.1" fill="#4e3c28"/><rect x="132.5" y="161.0" width="53.6" height="50.1" fill="#2e2218"/></g><rect x="0" y="0" width="159" height="184" filter="url(#n1)" style="mix-blend-mode:overlay" opacity=".3"/></svg></div>
<!-- 26.jpg -->
<div class="th" style="left:519px;top:193px;width:159px;height:139.5px"><svg style="left:0;top:0" width="159" height="139.5" viewBox="0 0 159 139.5"><defs><filter id="gb2" x="-50%" y="-50%" width="200%" height="200%" color-interpolation-filters="sRGB"><feGaussianBlur stdDeviation="8.0"/></filter></defs><g filter="url(#gb2)"><rect x="-26.5" y="-26.5" width="53.6" height="50.4" fill="#274150"/><rect x="26.5" y="-26.5" width="27.1" height="50.4" fill="#304d5d"/><rect x="53.0" y="-26.5" width="27.1" height="50.4" fill="#365565"/><rect x="79.5" y="-26.5" width="27.1" height="50.4" fill="#3a5969"/><rect x="106.0" y="-26.5" width="27.1" height="50.4" fill="#365161"/><rect x="132.5" y="-26.5" width="53.6" height="50.4" fill="#243948"/><rect x="-26.5" y="23.2" width="53.6" height="23.9" fill="#233d4e"/><rect x="26.5" y="23.2" width="27.1" height="23.9" fill="#365465"/><rect x="53.0" y="23.2" width="27.1" height="23.9" fill="#44677a"/><rect x="79.5" y="23.2" width="27.1" height="23.9" fill="#507184"/><rect x="106.0" y="23.2" width="27.1" height="23.9" fill="#537184"/><rect x="132.5" y="23.2" width="53.6" height="23.9" fill="#324557"/><rect x="-26.5" y="46.5" width="53.6" height="23.9" fill="#1d354a"/><rect x="26.5" y="46.5" width="27.1" height="23.9" fill="#2d4c5f"/><rect x="53.0" y="46.5" width="27.1" height="23.9" fill="#40657a"/><rect x="79.5" y="46.5" width="27.1" height="23.9" fill="#51778a"/><rect x="106.0" y="46.5" width="27.1" height="23.9" fill="#557386"/><rect x="132.5" y="46.5" width="53.6" height="23.9" fill="#28374a"/><rect x="-26.5" y="69.8" width="53.6" height="23.9" fill="#192f44"/><rect x="26.5" y="69.8" width="27.1" height="23.9" fill="#254459"/><rect x="53.0" y="69.8" width="27.1" height="23.9" fill="#385d71"/><rect x="79.5" y="69.8" width="27.1" height="23.9" fill="#456b80"/><rect x="106.0" y="69.8" width="27.1" height="23.9" fill="#3f5c6f"/><rect x="132.5" y="69.8" width="53.6" height="23.9" fill="#19273c"/><rect x="-26.5" y="93.0" width="53.6" height="23.9" fill="#14273c"/><rect x="26.5" y="93.0" width="27.1" height="23.9" fill="#1b344a"/><rect x="53.0" y="93.0" width="27.1" height="23.9" fill="#2c4e65"/><rect x="79.5" y="93.0" width="27.1" height="23.9" fill="#395f75"/><rect x="106.0" y="93.0" width="27.1" height="23.9" fill="#2a465b"/><rect x="132.5" y="93.0" width="53.6" height="23.9" fill="#121e31"/><rect x="-26.5" y="116.2" width="53.6" height="50.4" fill="#14293e"/><rect x="26.5" y="116.2" width="27.1" height="50.4" fill="#1b354a"/><rect x="53.0" y="116.2" width="27.1" height="50.4" fill="#26485f"/><rect x="79.5" y="116.2" width="27.1" height="50.4" fill="#2c5167"/><rect x="106.0" y="116.2" width="27.1" height="50.4" fill="#1d364c"/><rect x="132.5" y="116.2" width="53.6" height="50.4" fill="#0f1a29"/></g><rect x="0" y="0" width="159" height="139.5" filter="url(#n2)" style="mix-blend-mode:overlay" opacity=".32"/></svg></div>
<div class="th" style="left:519px;top:332.5px;width:159px;height:44.5px"><svg style="left:0;top:0" width="159" height="44.5" viewBox="0 0 159 44.5"><defs><filter id="gb3" x="-50%" y="-50%" width="200%" height="200%" color-interpolation-filters="sRGB"><feGaussianBlur stdDeviation="5.0"/></filter></defs><g filter="url(#gb3)"><rect x="-26.5" y="-26.5" width="53.6" height="41.9" fill="#1f4052"/><rect x="26.5" y="-26.5" width="27.1" height="41.9" fill="#25495b"/><rect x="53.0" y="-26.5" width="27.1" height="41.9" fill="#294f61"/><rect x="79.5" y="-26.5" width="27.1" height="41.9" fill="#294d5f"/><rect x="106.0" y="-26.5" width="27.1" height="41.9" fill="#254557"/><rect x="132.5" y="-26.5" width="53.6" height="41.9" fill="#1d384a"/><rect x="-26.5" y="14.8" width="53.6" height="15.4" fill="#2a5164"/><rect x="26.5" y="14.8" width="27.1" height="15.4" fill="#315c70"/><rect x="53.0" y="14.8" width="27.1" height="15.4" fill="#315a6e"/><rect x="79.5" y="14.8" width="27.1" height="15.4" fill="#2d5568"/><rect x="106.0" y="14.8" width="27.1" height="15.4" fill="#2f566a"/><rect x="132.5" y="14.8" width="53.6" height="15.4" fill="#294d63"/><rect x="-26.5" y="29.7" width="53.6" height="41.9" fill="#2d5466"/><rect x="26.5" y="29.7" width="27.1" height="41.9" fill="#335e71"/><rect x="53.0" y="29.7" width="27.1" height="41.9" fill="#315a6e"/><rect x="79.5" y="29.7" width="27.1" height="41.9" fill="#2f566a"/><rect x="106.0" y="29.7" width="27.1" height="41.9" fill="#2f586c"/><rect x="132.5" y="29.7" width="53.6" height="41.9" fill="#2c5168"/></g><rect x="0" y="0" width="159" height="44.5" filter="url(#n2)" style="mix-blend-mode:overlay" opacity=".32"/></svg></div>
<!-- 27.jpg -->
<div class="th" style="left:784px;top:193px;width:159px;height:145px"><svg style="left:0;top:0" width="159" height="145" viewBox="0 0 159 145"><defs><filter id="gb4" x="-50%" y="-50%" width="200%" height="200%" color-interpolation-filters="sRGB"><feGaussianBlur stdDeviation="8.0"/></filter></defs><g filter="url(#gb4)"><rect x="-26.5" y="-26.5" width="53.6" height="51.3" fill="#3a4442"/><rect x="26.5" y="-26.5" width="27.1" height="51.3" fill="#687470"/><rect x="53.0" y="-26.5" width="27.1" height="51.3" fill="#747a6c"/><rect x="79.5" y="-26.5" width="27.1" height="51.3" fill="#666c5c"/><rect x="106.0" y="-26.5" width="27.1" height="51.3" fill="#5c6a66"/><rect x="132.5" y="-26.5" width="53.6" height="51.3" fill="#505238"/><rect x="-26.5" y="24.2" width="53.6" height="24.8" fill="#4a5856"/><rect x="26.5" y="24.2" width="27.1" height="24.8" fill="#7c8882"/><rect x="53.0" y="24.2" width="27.1" height="24.8" fill="#a08a56"/><rect x="79.5" y="24.2" width="27.1" height="24.8" fill="#787658"/><rect x="106.0" y="24.2" width="27.1" height="24.8" fill="#5e6a62"/><rect x="132.5" y="24.2" width="53.6" height="24.8" fill="#74602e"/><rect x="-26.5" y="48.3" width="53.6" height="24.8" fill="#425452"/><rect x="26.5" y="48.3" width="27.1" height="24.8" fill="#6c7c76"/><rect x="53.0" y="48.3" width="27.1" height="24.8" fill="#928258"/><rect x="79.5" y="48.3" width="27.1" height="24.8" fill="#70725e"/><rect x="106.0" y="48.3" width="27.1" height="24.8" fill="#5e685e"/><rect x="132.5" y="48.3" width="53.6" height="24.8" fill="#60543a"/><rect x="-26.5" y="72.5" width="53.6" height="24.8" fill="#34484a"/><rect x="26.5" y="72.5" width="27.1" height="24.8" fill="#52686a"/><rect x="53.0" y="72.5" width="27.1" height="24.8" fill="#647266"/><rect x="79.5" y="72.5" width="27.1" height="24.8" fill="#646c5a"/><rect x="106.0" y="72.5" width="27.1" height="24.8" fill="#5a6058"/><rect x="132.5" y="72.5" width="53.6" height="24.8" fill="#4c4a46"/><rect x="-26.5" y="96.7" width="53.6" height="24.8" fill="#1c2a2a"/><rect x="26.5" y="96.7" width="27.1" height="24.8" fill="#3a4e4e"/><rect x="53.0" y="96.7" width="27.1" height="24.8" fill="#48585a"/><rect x="79.5" y="96.7" width="27.1" height="24.8" fill="#4e5650"/><rect x="106.0" y="96.7" width="27.1" height="24.8" fill="#4a4e4c"/><rect x="132.5" y="96.7" width="53.6" height="24.8" fill="#423a40"/><rect x="-26.5" y="120.8" width="53.6" height="51.3" fill="#121c1c"/><rect x="26.5" y="120.8" width="27.1" height="51.3" fill="#263636"/><rect x="53.0" y="120.8" width="27.1" height="51.3" fill="#32423f"/><rect x="79.5" y="120.8" width="27.1" height="51.3" fill="#384442"/><rect x="106.0" y="120.8" width="27.1" height="51.3" fill="#3c3c40"/><rect x="132.5" y="120.8" width="53.6" height="51.3" fill="#3a3038"/></g><rect x="0" y="0" width="159" height="145" filter="url(#n3)" style="mix-blend-mode:overlay" opacity=".26"/></svg></div>
<div class="th" style="left:784px;top:338px;width:159px;height:39px"><svg style="left:0;top:0" width="159" height="39" viewBox="0 0 159 39"><defs><filter id="gb5" x="-50%" y="-50%" width="200%" height="200%" color-interpolation-filters="sRGB"><feGaussianBlur stdDeviation="5.0"/></filter></defs><g filter="url(#gb5)"><rect x="-26.5" y="-26.5" width="53.6" height="40.1" fill="#284448"/><rect x="26.5" y="-26.5" width="27.1" height="40.1" fill="#325256"/><rect x="53.0" y="-26.5" width="27.1" height="40.1" fill="#36585c"/><rect x="79.5" y="-26.5" width="27.1" height="40.1" fill="#34565a"/><rect x="106.0" y="-26.5" width="27.1" height="40.1" fill="#305054"/><rect x="132.5" y="-26.5" width="53.6" height="40.1" fill="#28444a"/><rect x="-26.5" y="13.0" width="53.6" height="13.6" fill="#34585c"/><rect x="26.5" y="13.0" width="27.1" height="13.6" fill="#4a7478"/><rect x="53.0" y="13.0" width="27.1" height="13.6" fill="#487276"/><rect x="79.5" y="13.0" width="27.1" height="13.6" fill="#406a6e"/><rect x="106.0" y="13.0" width="27.1" height="13.6" fill="#386064"/><rect x="132.5" y="13.0" width="53.6" height="13.6" fill="#2c4e54"/><rect x="-26.5" y="26.0" width="53.6" height="40.1" fill="#30545a"/><rect x="26.5" y="26.0" width="27.1" height="40.1" fill="#42696e"/><rect x="53.0" y="26.0" width="27.1" height="40.1" fill="#426a6e"/><rect x="79.5" y="26.0" width="27.1" height="40.1" fill="#3c6468"/><rect x="106.0" y="26.0" width="27.1" height="40.1" fill="#345a60"/><rect x="132.5" y="26.0" width="53.6" height="40.1" fill="#2a4a50"/></g><rect x="0" y="0" width="159" height="39" filter="url(#n3)" style="mix-blend-mode:overlay" opacity=".26"/></svg></div>
<!-- 28.jpg -->
<div class="th" style="left:1048px;top:193px;width:159px;height:139.5px"><svg style="left:0;top:0" width="159" height="139.5" viewBox="0 0 159 139.5"><defs><filter id="gb6" x="-50%" y="-50%" width="200%" height="200%" color-interpolation-filters="sRGB"><feGaussianBlur stdDeviation="8.0"/></filter></defs><g filter="url(#gb6)"><rect x="-26.5" y="-26.5" width="53.6" height="50.4" fill="#403a36"/><rect x="26.5" y="-26.5" width="27.1" height="50.4" fill="#70685f"/><rect x="53.0" y="-26.5" width="27.1" height="50.4" fill="#929088"/><rect x="79.5" y="-26.5" width="27.1" height="50.4" fill="#a4a29a"/><rect x="106.0" y="-26.5" width="27.1" height="50.4" fill="#96968e"/><rect x="132.5" y="-26.5" width="53.6" height="50.4" fill="#7a7a72"/><rect x="-26.5" y="23.2" width="53.6" height="23.9" fill="#3c342e"/><rect x="26.5" y="23.2" width="27.1" height="23.9" fill="#6c6056"/><rect x="53.0" y="23.2" width="27.1" height="23.9" fill="#948f86"/><rect x="79.5" y="23.2" width="27.1" height="23.9" fill="#a6a49c"/><rect x="106.0" y="23.2" width="27.1" height="23.9" fill="#92908a"/><rect x="132.5" y="23.2" width="53.6" height="23.9" fill="#7c7a70"/><rect x="-26.5" y="46.5" width="53.6" height="23.9" fill="#3c3028"/><rect x="26.5" y="46.5" width="27.1" height="23.9" fill="#6a5a4e"/><rect x="53.0" y="46.5" width="27.1" height="23.9" fill="#8c847a"/><rect x="79.5" y="46.5" width="27.1" height="23.9" fill="#9a968e"/><rect x="106.0" y="46.5" width="27.1" height="23.9" fill="#8c887f"/><rect x="132.5" y="46.5" width="53.6" height="23.9" fill="#767068"/><rect x="-26.5" y="69.8" width="53.6" height="23.9" fill="#36281e"/><rect x="26.5" y="69.8" width="27.1" height="23.9" fill="#5c4838"/><rect x="53.0" y="69.8" width="27.1" height="23.9" fill="#766a5e"/><rect x="79.5" y="69.8" width="27.1" height="23.9" fill="#88827a"/><rect x="106.0" y="69.8" width="27.1" height="23.9" fill="#80786e"/><rect x="132.5" y="69.8" width="53.6" height="23.9" fill="#665c52"/><rect x="-26.5" y="93.0" width="53.6" height="23.9" fill="#261c14"/><rect x="26.5" y="93.0" width="27.1" height="23.9" fill="#463628"/><rect x="53.0" y="93.0" width="27.1" height="23.9" fill="#5a4e42"/><rect x="79.5" y="93.0" width="27.1" height="23.9" fill="#665e54"/><rect x="106.0" y="93.0" width="27.1" height="23.9" fill="#645a50"/><rect x="132.5" y="93.0" width="53.6" height="23.9" fill="#54483e"/><rect x="-26.5" y="116.2" width="53.6" height="50.4" fill="#120e0a"/><rect x="26.5" y="116.2" width="27.1" height="50.4" fill="#1e1814"/><rect x="53.0" y="116.2" width="27.1" height="50.4" fill="#28221e"/><rect x="79.5" y="116.2" width="27.1" height="50.4" fill="#2e2824"/><rect x="106.0" y="116.2" width="27.1" height="50.4" fill="#2c2622"/><rect x="132.5" y="116.2" width="53.6" height="50.4" fill="#221c18"/></g><rect x="0" y="0" width="159" height="139.5" filter="url(#n4)" style="mix-blend-mode:overlay" opacity=".22"/></svg></div>
<div class="th" style="left:1048px;top:332.5px;width:159px;height:44.5px"><svg style="left:0;top:0" width="159" height="44.5" viewBox="0 0 159 44.5"><defs><filter id="gb7" x="-50%" y="-50%" width="200%" height="200%" color-interpolation-filters="sRGB"><feGaussianBlur stdDeviation="5.0"/></filter></defs><g filter="url(#gb7)"><rect x="-26.5" y="-26.5" width="53.6" height="41.9" fill="#2e2824"/><rect x="26.5" y="-26.5" width="27.1" height="41.9" fill="#46403a"/><rect x="53.0" y="-26.5" width="27.1" height="41.9" fill="#544c46"/><rect x="79.5" y="-26.5" width="27.1" height="41.9" fill="#564e48"/><rect x="106.0" y="-26.5" width="27.1" height="41.9" fill="#4c443e"/><rect x="132.5" y="-26.5" width="53.6" height="41.9" fill="#342e2a"/><rect x="-26.5" y="14.8" width="53.6" height="15.4" fill="#4e4640"/><rect x="26.5" y="14.8" width="27.1" height="15.4" fill="#70665e"/><rect x="53.0" y="14.8" width="27.1" height="15.4" fill="#8a8078"/><rect x="79.5" y="14.8" width="27.1" height="15.4" fill="#887e76"/><rect x="106.0" y="14.8" width="27.1" height="15.4" fill="#6e645c"/><rect x="132.5" y="14.8" width="53.6" height="15.4" fill="#4a423c"/><rect x="-26.5" y="29.7" width="53.6" height="41.9" fill="#4a423c"/><rect x="26.5" y="29.7" width="27.1" height="41.9" fill="#6a6058"/><rect x="53.0" y="29.7" width="27.1" height="41.9" fill="#7a7068"/><rect x="79.5" y="29.7" width="27.1" height="41.9" fill="#786e66"/><rect x="106.0" y="29.7" width="27.1" height="41.9" fill="#625850"/><rect x="132.5" y="29.7" width="53.6" height="41.9" fill="#443c36"/></g><rect x="0" y="0" width="159" height="44.5" filter="url(#n4)" style="mix-blend-mode:overlay" opacity=".25"/></svg></div>
<!-- cursor highlight -->
<div class="a" style="left:1153.500px;top:212px;width:55px;height:55px;border-radius:50%;background:radial-gradient(circle,rgba(166,166,0,.93) 0,rgba(158,162,2,.92) 55%,rgba(146,156,8,.86) 88%,rgba(136,148,20,.45) 100%)"></div>
<div class="a" style="left:1177px;top:234.500px;width:10px;height:10px;border-radius:50%;background:radial-gradient(circle,#ee2c14 0,#ec3416 40%,rgba(226,80,16,.55) 70%,rgba(210,130,10,0) 100%)"></div>
<!-- 29.jpg -->
<div class="th" style="left:255px;top:408.4px;width:159px;height:169.6px"><svg style="left:0;top:0" width="159" height="169.6" viewBox="0 0 159 169.6"><defs><filter id="gb8" x="-50%" y="-50%" width="200%" height="200%" color-interpolation-filters="sRGB"><feGaussianBlur stdDeviation="8.0"/></filter></defs><g filter="url(#gb8)"><rect x="-26.5" y="-26.5" width="53.6" height="51.3" fill="#0a0806"/><rect x="26.5" y="-26.5" width="27.1" height="51.3" fill="#241e1a"/><rect x="53.0" y="-26.5" width="27.1" height="51.3" fill="#4a4038"/><rect x="79.5" y="-26.5" width="27.1" height="51.3" fill="#564e46"/><rect x="106.0" y="-26.5" width="27.1" height="51.3" fill="#4c4844"/><rect x="132.5" y="-26.5" width="53.6" height="51.3" fill="#2e2c2a"/><rect x="-26.5" y="24.2" width="53.6" height="24.8" fill="#0e0a08"/><rect x="26.5" y="24.2" width="27.1" height="24.8" fill="#3c302a"/><rect x="53.0" y="24.2" width="27.1" height="24.8" fill="#6e625a"/><rect x="79.5" y="24.2" width="27.1" height="24.8" fill="#90867c"/><rect x="106.0" y="24.2" width="27.1" height="24.8" fill="#7a7876"/><rect x="132.5" y="24.2" width="53.6" height="24.8" fill="#444240"/><rect x="-26.5" y="48.5" width="53.6" height="24.8" fill="#1a120c"/><rect x="26.5" y="48.5" width="27.1" height="24.8" fill="#4a3a30"/><rect x="53.0" y="48.5" width="27.1" height="24.8" fill="#7e6e62"/><rect x="79.5" y="48.5" width="27.1" height="24.8" fill="#a0968c"/><rect x="106.0" y="48.5" width="27.1" height="24.8" fill="#8c8680"/><rect x="132.5" y="48.5" width="53.6" height="24.8" fill="#524a42"/><rect x="-26.5" y="72.7" width="53.6" height="24.8" fill="#26180e"/><rect x="26.5" y="72.7" width="27.1" height="24.8" fill="#5c4230"/><rect x="53.0" y="72.7" width="27.1" height="24.8" fill="#80644c"/><rect x="79.5" y="72.7" width="27.1" height="24.8" fill="#8c7866"/><rect x="106.0" y="72.7" width="27.1" height="24.8" fill="#7e7266"/><rect x="132.5" y="72.7" width="53.6" height="24.8" fill="#4c4036"/><rect x="-26.5" y="96.9" width="53.6" height="24.8" fill="#24160c"/><rect x="26.5" y="96.9" width="27.1" height="24.8" fill="#5e3e24"/><rect x="53.0" y="96.9" width="27.1" height="24.8" fill="#744e30"/><rect x="79.5" y="96.9" width="27.1" height="24.8" fill="#70523a"/><rect x="106.0" y="96.9" width="27.1" height="24.8" fill="#64503e"/><rect x="132.5" y="96.9" width="53.6" height="24.8" fill="#3c2e24"/><rect x="-26.5" y="121.1" width="53.6" height="24.8" fill="#160e08"/><rect x="26.5" y="121.1" width="27.1" height="24.8" fill="#3c2616"/><rect x="53.0" y="121.1" width="27.1" height="24.8" fill="#4e321e"/><rect x="79.5" y="121.1" width="27.1" height="24.8" fill="#4a3220"/><rect x="106.0" y="121.1" width="27.1" height="24.8" fill="#3c2c20"/><rect x="132.5" y="121.1" width="53.6" height="24.8" fill="#221a14"/><rect x="-26.5" y="145.4" width="53.6" height="51.3" fill="#080604"/><rect x="26.5" y="145.4" width="27.1" height="51.3" fill="#120c08"/><rect x="53.0" y="145.4" width="27.1" height="51.3" fill="#181009"/><rect x="79.5" y="145.4" width="27.1" height="51.3" fill="#18110b"/><rect x="106.0" y="145.4" width="27.1" height="51.3" fill="#140e0a"/><rect x="132.5" y="145.4" width="53.6" height="51.3" fill="#0a0806"/></g><rect x="0" y="0" width="159" height="169.6" filter="url(#n5)" style="mix-blend-mode:overlay" opacity=".32"/></svg></div>
<div class="th" style="left:255px;top:578px;width:159px;height:59.5px"><svg style="left:0;top:0" width="159" height="59.5" viewBox="0 0 159 59.5"><defs><filter id="gb9" x="-50%" y="-50%" width="200%" height="200%" color-interpolation-filters="sRGB"><feGaussianBlur stdDeviation="6.0"/></filter></defs><g filter="url(#gb9)"><rect x="-26.5" y="-26.5" width="53.6" height="46.9" fill="#44362a"/><rect x="26.5" y="-26.5" width="27.1" height="46.9" fill="#625242"/><rect x="53.0" y="-26.5" width="27.1" height="46.9" fill="#6e5e4c"/><rect x="79.5" y="-26.5" width="27.1" height="46.9" fill="#685644"/><rect x="106.0" y="-26.5" width="27.1" height="46.9" fill="#5a4230"/><rect x="132.5" y="-26.5" width="53.6" height="46.9" fill="#3c2a1c"/><rect x="-26.5" y="19.8" width="53.6" height="20.4" fill="#5a4632"/><rect x="26.5" y="19.8" width="27.1" height="20.4" fill="#8a6e50"/><rect x="53.0" y="19.8" width="27.1" height="20.4" fill="#8e765c"/><rect x="79.5" y="19.8" width="27.1" height="20.4" fill="#86705a"/><rect x="106.0" y="19.8" width="27.1" height="20.4" fill="#7a5636"/><rect x="132.5" y="19.8" width="53.6" height="20.4" fill="#4a3420"/><rect x="-26.5" y="39.7" width="53.6" height="46.9" fill="#46403a"/><rect x="26.5" y="39.7" width="27.1" height="46.9" fill="#6a625a"/><rect x="53.0" y="39.7" width="27.1" height="46.9" fill="#7e766e"/><rect x="79.5" y="39.7" width="27.1" height="46.9" fill="#7a726a"/><rect x="106.0" y="39.7" width="27.1" height="46.9" fill="#625448"/><rect x="132.5" y="39.7" width="53.6" height="46.9" fill="#3e3228"/></g><rect x="0" y="0" width="159" height="59.5" filter="url(#n5)" style="mix-blend-mode:overlay" opacity=".32"/></svg></div>
<!-- 30.jpg -->
<div class="th" style="left:519px;top:408.4px;width:159px;height:189.6px"><svg style="left:0;top:0" width="159" height="189.6" viewBox="0 0 159 189.6"><defs><filter id="gb10" x="-50%" y="-50%" width="200%" height="200%" color-interpolation-filters="sRGB"><feGaussianBlur stdDeviation="8.0"/></filter></defs><g filter="url(#gb10)"><rect x="-26.5" y="-26.5" width="53.6" height="50.8" fill="#303634"/><rect x="26.5" y="-26.5" width="27.1" height="50.8" fill="#434b48"/><rect x="53.0" y="-26.5" width="27.1" height="50.8" fill="#4a5656"/><rect x="79.5" y="-26.5" width="27.1" height="50.8" fill="#525a56"/><rect x="106.0" y="-26.5" width="27.1" height="50.8" fill="#686040"/><rect x="132.5" y="-26.5" width="53.6" height="50.8" fill="#3e4440"/><rect x="-26.5" y="23.7" width="53.6" height="24.3" fill="#3a403c"/><rect x="26.5" y="23.7" width="27.1" height="24.3" fill="#626046"/><rect x="53.0" y="23.7" width="27.1" height="24.3" fill="#5e6662"/><rect x="79.5" y="23.7" width="27.1" height="24.3" fill="#666c6a"/><rect x="106.0" y="23.7" width="27.1" height="24.3" fill="#5c625c"/><rect x="132.5" y="23.7" width="53.6" height="24.3" fill="#444c48"/><rect x="-26.5" y="47.4" width="53.6" height="24.3" fill="#404644"/><rect x="26.5" y="47.4" width="27.1" height="24.3" fill="#5c625e"/><rect x="53.0" y="47.4" width="27.1" height="24.3" fill="#808888"/><rect x="79.5" y="47.4" width="27.1" height="24.3" fill="#7c8484"/><rect x="106.0" y="47.4" width="27.1" height="24.3" fill="#727258"/><rect x="132.5" y="47.4" width="53.6" height="24.3" fill="#4c5450"/><rect x="-26.5" y="71.1" width="53.6" height="24.3" fill="#3e4644"/><rect x="26.5" y="71.1" width="27.1" height="24.3" fill="#5a625e"/><rect x="53.0" y="71.1" width="27.1" height="24.3" fill="#788082"/><rect x="79.5" y="71.1" width="27.1" height="24.3" fill="#787c74"/><rect x="106.0" y="71.1" width="27.1" height="24.3" fill="#76724f"/><rect x="132.5" y="71.1" width="53.6" height="24.3" fill="#4c524c"/><rect x="-26.5" y="94.8" width="53.6" height="24.3" fill="#384240"/><rect x="26.5" y="94.8" width="27.1" height="24.3" fill="#525c5a"/><rect x="53.0" y="94.8" width="27.1" height="24.3" fill="#667074"/><rect x="79.5" y="94.8" width="27.1" height="24.3" fill="#687074"/><rect x="106.0" y="94.8" width="27.1" height="24.3" fill="#66694f"/><rect x="132.5" y="94.8" width="53.6" height="24.3" fill="#485250"/><rect x="-26.5" y="118.5" width="53.6" height="24.3" fill="#2e3a3c"/><rect x="26.5" y="118.5" width="27.1" height="24.3" fill="#465050"/><rect x="53.0" y="118.5" width="27.1" height="24.3" fill="#525c5c"/><rect x="79.5" y="118.5" width="27.1" height="24.3" fill="#5c6258"/><rect x="106.0" y="118.5" width="27.1" height="24.3" fill="#505c60"/><rect x="132.5" y="118.5" width="53.6" height="24.3" fill="#465052"/><rect x="-26.5" y="142.2" width="53.6" height="24.3" fill="#2a3434"/><rect x="26.5" y="142.2" width="27.1" height="24.3" fill="#4c4e3c"/><rect x="53.0" y="142.2" width="27.1" height="24.3" fill="#706844"/><rect x="79.5" y="142.2" width="27.1" height="24.3" fill="#585c4c"/><rect x="106.0" y="142.2" width="27.1" height="24.3" fill="#44525a"/><rect x="132.5" y="142.2" width="53.6" height="24.3" fill="#3a444a"/><rect x="-26.5" y="165.9" width="53.6" height="50.8" fill="#1e2a2a"/><rect x="26.5" y="165.9" width="27.1" height="50.8" fill="#3c4034"/><rect x="53.0" y="165.9" width="27.1" height="50.8" fill="#424a44"/><rect x="79.5" y="165.9" width="27.1" height="50.8" fill="#3e4a4a"/><rect x="106.0" y="165.9" width="27.1" height="50.8" fill="#36444a"/><rect x="132.5" y="165.9" width="53.6" height="50.8" fill="#2c363a"/></g><rect x="0" y="0" width="159" height="189.6" filter="url(#n6)" style="mix-blend-mode:overlay" opacity=".32"/></svg></div>
<div class="th" style="left:519px;top:598px;width:159px;height:39.5px"><svg style="left:0;top:0" width="159" height="39.5" viewBox="0 0 159 39.5"><defs><filter id="gb11" x="-50%" y="-50%" width="200%" height="200%" color-interpolation-filters="sRGB"><feGaussianBlur stdDeviation="5.0"/></filter></defs><g filter="url(#gb11)"><rect x="-26.5" y="-26.5" width="53.6" height="40.3" fill="#283434"/><rect x="26.5" y="-26.5" width="27.1" height="40.3" fill="#40483f"/><rect x="53.0" y="-26.5" width="27.1" height="40.3" fill="#485250"/><rect x="79.5" y="-26.5" width="27.1" height="40.3" fill="#44504f"/><rect x="106.0" y="-26.5" width="27.1" height="40.3" fill="#3e4a4e"/><rect x="132.5" y="-26.5" width="53.6" height="40.3" fill="#303a3e"/><rect x="-26.5" y="13.2" width="53.6" height="13.8" fill="#3a4648"/><rect x="26.5" y="13.2" width="27.1" height="13.8" fill="#525e5e"/><rect x="53.0" y="13.2" width="27.1" height="13.8" fill="#5a666c"/><rect x="79.5" y="13.2" width="27.1" height="13.8" fill="#56626a"/><rect x="106.0" y="13.2" width="27.1" height="13.8" fill="#505c5e"/><rect x="132.5" y="13.2" width="53.6" height="13.8" fill="#3e4a4a"/><rect x="-26.5" y="26.3" width="53.6" height="40.3" fill="#424e52"/><rect x="26.5" y="26.3" width="27.1" height="40.3" fill="#6a767a"/><rect x="53.0" y="26.3" width="27.1" height="40.3" fill="#6a767c"/><rect x="79.5" y="26.3" width="27.1" height="40.3" fill="#5e6a6e"/><rect x="106.0" y="26.3" width="27.1" height="40.3" fill="#585e54"/><rect x="132.5" y="26.3" width="53.6" height="40.3" fill="#424a48"/></g><rect x="0" y="0" width="159" height="39.5" filter="url(#n6)" style="mix-blend-mode:overlay" opacity=".32"/></svg></div>
<!-- il_1588 collage : left main image -->
<div class="th" style="left:749px;top:461.5px;width:125px;height:137.5px"><svg style="left:0;top:0" width="125" height="137.5" viewBox="0 0 125 137.5"><defs><filter id="gb12" x="-50%" y="-50%" width="200%" height="200%" color-interpolation-filters="sRGB"><feGaussianBlur stdDeviation="7.0"/></filter></defs><g filter="url(#gb12)"><rect x="-31.2" y="-31.2" width="63.1" height="54.8" fill="#1e1a16"/><rect x="31.2" y="-31.2" width="31.9" height="54.8" fill="#4a463e"/><rect x="62.5" y="-31.2" width="31.9" height="54.8" fill="#5e5a52"/><rect x="93.8" y="-31.2" width="63.1" height="54.8" fill="#5a4e42"/><rect x="-31.2" y="22.9" width="63.1" height="23.5" fill="#2e2a24"/><rect x="31.2" y="22.9" width="31.9" height="23.5" fill="#625e54"/><rect x="62.5" y="22.9" width="31.9" height="23.5" fill="#7a766e"/><rect x="93.8" y="22.9" width="63.1" height="23.5" fill="#62584c"/><rect x="-31.2" y="45.8" width="63.1" height="23.5" fill="#3a3630"/><rect x="31.2" y="45.8" width="31.9" height="23.5" fill="#6c685e"/><rect x="62.5" y="45.8" width="31.9" height="23.5" fill="#7e7a70"/><rect x="93.8" y="45.8" width="63.1" height="23.5" fill="#645a4e"/><rect x="-31.2" y="68.8" width="63.1" height="23.5" fill="#3c362e"/><rect x="31.2" y="68.8" width="31.9" height="23.5" fill="#6a665c"/><rect x="62.5" y="68.8" width="31.9" height="23.5" fill="#78746a"/><rect x="93.8" y="68.8" width="63.1" height="23.5" fill="#62584c"/><rect x="-31.2" y="91.7" width="63.1" height="23.5" fill="#342e26"/><rect x="31.2" y="91.7" width="31.9" height="23.5" fill="#5e584e"/><rect x="62.5" y="91.7" width="31.9" height="23.5" fill="#6c675e"/><rect x="93.8" y="91.7" width="63.1" height="23.5" fill="#584e42"/><rect x="-31.2" y="114.6" width="63.1" height="54.8" fill="#1e1a14"/><rect x="31.2" y="114.6" width="31.9" height="54.8" fill="#3a342c"/><rect x="62.5" y="114.6" width="31.9" height="54.8" fill="#464038"/><rect x="93.8" y="114.6" width="63.1" height="54.8" fill="#383028"/></g><rect x="0" y="0" width="125" height="137.5" filter="url(#n7)" style="mix-blend-mode:overlay" opacity=".32"/></svg></div>
<div class="th" style="left:749px;top:599px;width:125px;height:38.5px"><svg style="left:0;top:0" width="125" height="38.5" viewBox="0 0 125 38.5"><defs><filter id="gb13" x="-50%" y="-50%" width="200%" height="200%" color-interpolation-filters="sRGB"><feGaussianBlur stdDeviation="5.0"/></filter></defs><g filter="url(#gb13)"><rect x="-31.2" y="-31.2" width="63.1" height="51.1" fill="#241e18"/><rect x="31.2" y="-31.2" width="31.9" height="51.1" fill="#3c342a"/><rect x="62.5" y="-31.2" width="31.9" height="51.1" fill="#443c32"/><rect x="93.8" y="-31.2" width="63.1" height="51.1" fill="#342c24"/><rect x="-31.2" y="19.2" width="63.1" height="51.1" fill="#2e261e"/><rect x="31.2" y="19.2" width="31.9" height="51.1" fill="#645a4c"/><rect x="62.5" y="19.2" width="31.9" height="51.1" fill="#564e42"/><rect x="93.8" y="19.2" width="63.1" height="51.1" fill="#30281f"/></g><rect x="0" y="0" width="125" height="38.5" filter="url(#n7)" style="mix-blend-mode:overlay" opacity=".32"/></svg></div>
<!-- right cells -->
<div class="a" style="left:873.500px;top:461.500px;width:105px;height:176px;background:#2a221c"></div>
<div class="a" style="left:874px;top:461.500px;width:53px;height:35.500px;background:radial-gradient(ellipse at 50% 45%,#8c745a 0,#725c44 55%,#54422f 100%)"></div>
<div class="a" style="left:928px;top:461.500px;width:50.500px;height:35.500px;background:radial-gradient(ellipse at 35% 50%,#6e5e4e 0,#54453a 55%,#3a2e26 100%)"></div>
<div class="a" style="left:874px;top:498.500px;width:53px;height:34.500px;background:radial-gradient(ellipse at 50% 50%,#687460 0,#56604e 55%,#3e463a 100%)"></div>
<div class="a" style="left:928px;top:498.500px;width:50.500px;height:34.500px;background:radial-gradient(ellipse at 50% 50%,#8c7a6a 0,#705f50 55%,#55463a 100%)"></div>
<div class="a" style="left:874px;top:534px;width:53px;height:57px;background:radial-gradient(ellipse at 50% 25%,#94887c 0,#82766a 50%,#60564c 100%)"></div>
<div class="a" style="left:928px;top:534px;width:50.500px;height:57px;background:linear-gradient(90deg,#787878 0,#6c6c6c 55%,#3e3e3e 100%)"></div>
<div class="a" style="left:874px;top:592px;width:53px;height:11.500px;background:#9a6052"></div>
<div class="a" style="left:928px;top:592px;width:50.500px;height:11.500px;background:#58695c"></div>
<div class="a" style="left:874px;top:604.500px;width:53px;height:33px;background:radial-gradient(ellipse at 50% 50%,#1f4e78 0,#1b456c 60%,#143452 100%)"></div>
<div class="a" style="left:928px;top:604.500px;width:50.500px;height:33px;background:radial-gradient(ellipse at 55% 45%,#7c5a2a 0,#664822 55%,#3c2a14 100%)"></div>
<svg style="left:873.500px;top:461.500px;mix-blend-mode:overlay" width="105" height="176" viewBox="0 0 105 176"><rect x="0" y="0" width="105" height="176" filter="url(#n5)" opacity=".45"/></svg>
<!-- banner -->
<svg style="left:817px;top:553px" width="150" height="42" viewBox="0 0 150 42"><path d="M2 9.500l10-2 3-3 12-1.500L32 1l40 .5 35-1 32 1.500 7 1-3 5 3 6-4 6 2 7-5 4 2 5-30 1.500-40-.5-30 1-18-2-6-4-9-1.500 4-4-9-2 3-3.500-8-1.500z" fill="#3b2015"/></svg>
<div class="t" style="left:842.0px;top:561.96px;font-size:16.0px;letter-spacing:0.022px;color:#fff;font-weight:bold;">OLD MASTER</div>
<div class="t" style="left:850.0px;top:572.55px;font-size:6.5px;letter-spacing:0.875px;color:#fff;font-weight:bold;">20 Digital Backgrounds</div>
<div class="t" style="left:927.0px;top:578.75px;font-size:3.6px;letter-spacing:0.230px;color:#c8b8a8;font-weight:bold;">by FOTOTORO</div>
<!-- store card -->
<div class="a" style="left:1016px;top:522px;width:227px;height:116px;background:#fff"></div>
<svg style="left:1060px;top:525px" width="140" height="35" viewBox="0 0 1280 320" fill="none" stroke="#3b3bc2" stroke-width="29" stroke-linecap="round" stroke-linejoin="round">
<path d="M1205 82V185"/><path d="M1168 52q16-20 33-4t36-6" stroke-width="17"/>
<path d="M1105 95q46 34 36 74-20 22-60 14"/>
<path d="M1040 125q10 75-30 100-17 9-37 6"/>
<path d="M965 132v46q-16 16-35 2v-40m0 40q-16 16-35 0v-36m0 30q-4 62-55 66-66 4-65-92"/>
<path d="M690 150q10-56-30-55-36 5-25 40 15 25 55 15v25q0 10-20 10h-55"/><circle cx="668" cy="50" r="5" fill="#3b3bc2"/>
<path d="M612 150q4 66-42 85-15 6-32 3"/>
<path d="M530 160q10-51-25-50-31 5-20 35 10 20 45 15 0 55-35 75-15 7-32 3"/>
<path d="M450 132v48M415 142v40M380 142v40M450 184H200"/><circle cx="350" cy="78" r="4" fill="#3b3bc2"/><circle cx="396" cy="78" r="4" fill="#3b3bc2"/><circle cx="373" cy="46" r="4" fill="#3b3bc2"/>
<path d="M296 62l-74 56q-12 30 12 62M304 100l-56 38"/>
<path d="M185 78v106"/>
<path d="M150 184q6-54-30-59-41 5-35 36 10 30 65 23H105"/>
</svg>
<div class="t" style="left:1067.5px;top:559.06px;font-size:16.0px;letter-spacing:0.068px;color:#c3164d;font-weight:bold;">www.mycanon.ir</div>
<!-- green persian line (stroked squiggles) -->
<svg style="left:1030px;top:578px" width="194" height="16" viewBox="0 0 194 16" fill="none" stroke="#9ab934" stroke-width="2" stroke-linecap="round" stroke-linejoin="round">
<path d="M2 10q3 3 7 0V5M12 10h8V5l-3 2M23 10q2 2 5 0t4 0V6M14 2.500v.1M27 3v.1"/>
<path d="M38 10h6q3-4-1-5-3 1-1 5M48 4v6q2 2 5 0t5 0V5M53 2v.1M62 10h10V4M66 13.500v.1M69 13.500v.1"/>
<path d="M78 4v6h5q3-4-1-5-3 1-1 5M88 10h4l3-6M98 10q2 2 4 0t4 0t4 0V4M104 2v.1M107 2v.1M113 4v6M116 10q0-5 4-4t-1 4"/>
<path d="M124 10h6V5M127 13.500v.1M133 4v6h5V6M141 10q3 2 6 0V6q-3-2-5 1M151 10q2 3 5-3"/>
<path d="M160 10h5V5M162 13.500v.1M168 10q0-5 4-4t-1 4h6V5M180 4v6q2 2 4 0V6M188 10h4V4M190 13.500v.1"/>
</svg>
<!-- phones -->
<svg style="left:1054px;top:597px" width="10" height="13" viewBox="0 0 10 13"><path d="M2 0.500l2.500 0 1 3.500-1.500 1.200c.5 2 1.500 3.300 3 4.300l1.500-1 2 2.500-1.500 1.800C4.500 12.500-.5 5.500 2 0.500z" fill="#2b6c8e"/></svg>
<div class="t" style="left:1068.0px;top:597.78px;font-size:9.3px;letter-spacing:0.372px;color:#b23ab2;font-weight:bold;">0914-840-840-1</div>
<div class="a" style="left:1165.800px;top:600.200px;width:10px;height:10px;border-radius:50%;background:#2bb94d"></div>
<svg style="left:1168px;top:602.400px" width="6" height="6" viewBox="0 0 6 6"><path d="M1.200 0.600c-.8 2 1.500 4.500 4 4.200l.3-1-1.200-.7-.6.500C3 3.300 2.400 2.700 2.200 2l.5-.5L2.100 0.300z" fill="#fff"/></svg>
<div class="t" style="left:1179.0px;top:598.65px;font-size:6.2px;letter-spacing:0.243px;color:#c04ac0;font-weight:bold;">09148408401</div>
<svg style="left:1088px;top:617px" width="19" height="11" viewBox="0 0 19 11"><path d="M0.500 3C3-.5 16-.5 18.500 3l-1 2.300-3-.8V3h-10v1.500l-3 .8z" fill="#c9281e"/><path d="M3.500 10.500c0-3 2-5 3-5.500h6c1 .5 3 2.500 3 5.500z" fill="#c9281e"/><circle cx="9.500" cy="7.800" r="1.700" fill="#fff"/></svg>
<div class="t" style="left:1111.0px;top:615.28px;font-size:9.0px;letter-spacing:0.534px;color:#4a3cb6;font-weight:bold;">041-3725-1308</div>
<!-- ===== FILE LABELS ===== -->
<div class="t" style="left:323.0px;top:385.33px;font-size:10.6px;letter-spacing:0.186px;color:#1a1a1a;">25.jpg</div>
<div class="t" style="left:587.5px;top:385.33px;font-size:10.6px;letter-spacing:0.186px;color:#1a1a1a;">26.jpg</div>
<div class="t" style="left:852.0px;top:385.33px;font-size:10.6px;letter-spacing:0.186px;color:#1a1a1a;">27.jpg</div>
<div class="t" style="left:1116.0px;top:385.33px;font-size:10.6px;letter-spacing:0.186px;color:#1a1a1a;">28.jpg</div>
<div class="t" style="left:323.0px;top:646.33px;font-size:10.6px;letter-spacing:0.186px;color:#1a1a1a;">29.jpg</div>
<div class="t" style="left:587.5px;top:646.33px;font-size:10.6px;letter-spacing:0.186px;color:#1a1a1a;">30.jpg</div>
<div class="t" style="left:792.0px;top:646.33px;font-size:10.6px;letter-spacing:-0.065px;color:#1a1a1a;">il_1588xN.4958747122_lv5z.jpg</div>
<div class="t" style="left:1113.0px;top:646.33px;font-size:10.6px;letter-spacing:-0.395px;color:#1a1a1a;">1</div>
<svg style="left:1119px;top:645px" width="13" height="15" viewBox="0 0 13 15" fill="none" stroke="#1a1a1a" stroke-width="1.100" stroke-linecap="round"><path d="M11.800 7.500v3q-1.500 1.500-3 0v-2m0 2q-1.500 1.500-3 0v-2m0 1.500q0 4-2.800 4T0.700 9"/><circle cx="7" cy="4.500" r=".5" fill="#1a1a1a"/><circle cx="9.800" cy="4.500" r=".5" fill="#1a1a1a"/><circle cx="8.400" cy="2.300" r=".5" fill="#1a1a1a"/></svg>
<div class="t" style="left:1132.0px;top:646.33px;font-size:10.6px;letter-spacing:0.227px;color:#1a1a1a;">.jpg</div>
<!-- ===== SCROLLBAR ===== -->
<div class="a" style="left:1270.500px;top:187px;width:10px;height:475px;background:#f0f0f0"></div>
<div class="a" style="left:1270.500px;top:545px;width:10px;height:98.800px;background:#cbcbcb"></div>
<svg style="left:1273.500px;top:197px" width="9" height="7" viewBox="0 0 9 7"><path d="M0.800 5.500l3.700-3.800 3.700 3.800" fill="none" stroke="#505050" stroke-width="1.700"/></svg>
<svg style="left:1273.500px;top:651px" width="9" height="7" viewBox="0 0 9 7"><path d="M0.800 1.500l3.700 3.800 3.700-3.800" fill="none" stroke="#505050" stroke-width="1.700"/></svg>
<!-- ===== STATUS BAR ===== -->
<div class="t" style="left:13.3px;top:666.23px;font-size:10.6px;letter-spacing:0.130px;color:#333;">32 items</div>
<div class="t" style="left:74.6px;top:666.23px;font-size:10.6px;letter-spacing:0.093px;color:#333;">1 item selected  9.14 MB</div>
<svg style="left:1243px;top:666px" width="37" height="14" viewBox="0 0 37 14"><g fill="none" stroke="#8a8a8a" stroke-width=".8"><rect x="0.500" y="0.800" width="3.600" height="3.600"/><rect x="0.500" y="4.600" width="3.600" height="3.600"/><rect x="0.500" y="8.400" width="3.600" height="3.600"/><path d="M6 2.600h3.500M11 2.600h4M6 6.400h3.500M11 6.400h4M6 10.200h3.500M11 10.200h4" stroke="#777" stroke-width="1.200"/></g><rect x="22" y="1.200" width="13" height="10.800" fill="#e4eef8" stroke="#9cc0e6"/><rect x="24" y="3" width="9" height="7.200" fill="#a9cbe6"/><path d="M24 10.200l2.500-3.200 2.500 1.500 1.500-1 2.500 1.500v1.200z" fill="#3e4e5c"/></svg>
<!-- ===== TASKBAR ===== -->
<div class="a" style="left:0;top:684px;width:1280px;height:36px;background:#1c2a31"></div>
<div class="a" style="left:48px;top:684px;width:45.500px;height:36px;background:#44525a"></div>
<div class="a" style="left:48px;top:718.500px;width:45.500px;height:1.500px;background:#7fbdec"></div>
<!-- start -->
<svg style="left:14.800px;top:694.800px" width="16" height="16" viewBox="0 0 16 16" fill="#fff"><path d="M0 2.200l6.500-.9v6.200H0zM7.300 1.200L15.500 0v7.500H7.300zM0 8.300h6.500v6.200L0 13.600zM7.300 8.300h8.200v7.500l-8.200-1.200z"/></svg>
<!-- explorer -->
<svg style="left:59.700px;top:692.800px" width="22" height="19" viewBox="0 0 22 19"><path d="M0.500 2.500h7l1.500 2h12v13.500h-20.500z" fill="#e7b83f"/><path d="M0.500 6h20.500v12.500H0.500z" fill="#f9dc7c"/><path d="M4.500 12h12v6.500h-12z" fill="#3f8fd8"/><path d="M7 14.500h7v4H7z" fill="#f9dc7c"/></svg>
<!-- photoshop -->
<svg style="left:105.500px;top:691.500px" width="23" height="23" viewBox="0 0 23 23"><rect x="0.500" y="0.500" width="21.500" height="21.500" rx="3" fill="#eaf1f8" stroke="#c9d8e8"/></svg>
<div class="t" style="left:111.0px;top:695.37px;font-size:12.5px;letter-spacing:-1.745px;color:#3273c2;font-weight:bold;">Ps</div>
<!-- firefox -->
<svg style="left:151px;top:691px" width="24" height="24" viewBox="0 0 24 24"><defs><radialGradient id="ffg" cx="62%" cy="22%" r="85%"><stop offset="0" stop-color="#ffe14a"/><stop offset=".35" stop-color="#ff9d1c"/><stop offset=".7" stop-color="#f5453a"/><stop offset="1" stop-color="#d81e62"/></radialGradient></defs><path d="M12 3.500c1.500-.2 2.500-1.500 2.800-3 2 1.800 2.500 3.600 2.400 5 1-.6 1.500-1.600 1.600-2.600C21.500 5.500 23 8.800 22.500 12.500 22 18.500 17.500 22.500 12 22.500S1.500 18.500 1.200 13C1 9 3 5.500 6 4c-.3 1 .2 2 .8 2.500C8 4.800 10 3.700 12 3.500z" fill="url(#ffg)"/><circle cx="11.800" cy="13" r="5.600" fill="#7542e5"/><path d="M6 12.500c1.500-3 5-3.500 7-1.500 1 1 1 2.500 0 3.500 2.500.5 4.500-1 5-3.500.8 4-2 8-6.500 8-4 0-6.500-3-5.500-6.500z" fill="#ff8a1a"/><path d="M9 9.500c1.500-1 3.500-.6 4.500.6-1.500-.3-2.500.2-3 1.200-1-.3-1.500-1-1.500-1.800z" fill="#5a2fc2"/></svg>
<!-- tray -->
<svg style="left:1079px;top:699.500px" width="13" height="9" viewBox="0 0 13 9"><path d="M1 7.500l5.300-5.500 5.300 5.500" fill="none" stroke="#fff" stroke-width="1.500"/></svg>
<svg style="left:1103px;top:697.500px" width="14" height="13" viewBox="0 0 14 13" fill="none" stroke="#fff" stroke-width="1.200"><path d="M1 12C1 5.500 6 1 13 1" /><path d="M4.500 12c0-4.500 3.500-7.500 8.500-7.500" opacity=".85"/><path d="M8 12c0-2.500 2-4 5-4" opacity=".85"/><circle cx="11.800" cy="11" r="1" fill="#fff" stroke="none"/></svg>
<svg style="left:1122px;top:697.500px" width="16" height="13" viewBox="0 0 16 13" fill="none" stroke="#fff" stroke-width="1.100"><path d="M1 4.500h2.500L7 1.500v10L3.500 8.500H1z"/><path d="M9.500 4.500c1 1 1 3 0 4M11.500 2.800c2 2 2 5.400 0 7.400" opacity=".9"/><path d="M13.500 1.200c2.800 2.800 2.800 7.800 0 10.600" opacity=".55"/></svg>
<!-- FA (persian "fa" drawn as strokes) -->
<svg style="left:1153px;top:690.500px" width="10" height="10" viewBox="0 0 10 10" fill="none" stroke="#fff" stroke-width="1.200" stroke-linecap="round"><path d="M1.200 1.500v4.500q0 1.800 1.800 1.800h5.500V5.800a1.400 1.400 0 1 0-1.400 1.400"/><circle cx="6.800" cy="1.600" r=".75" fill="#fff" stroke="none"/></svg>
<div class="t" style="left:1152.7px;top:704.87px;font-size:10.2px;letter-spacing:-0.386px;color:#fff;">FA</div>
<div class="t" style="left:1185.6px;top:687.12px;font-size:10.9px;letter-spacing:-0.099px;color:#fff;">4:41 PM</div>
<div class="t" style="left:1183.8px;top:704.22px;font-size:10.9px;letter-spacing:0.134px;color:#fff;">9/9/2023</div>
<svg style="left:1246.500px;top:695.500px" width="23" height="22" viewBox="0 0 23 22"><path d="M1 1h14.500v11h-9L3.500 15v-3H1z" fill="#fff"/><path d="M3.500 4h9.500M3.500 6.500h9.500M3.500 9h6" stroke="#1c2a31" stroke-width="1"/><circle cx="14.800" cy="14.800" r="6.500" fill="#1c2a31" stroke="#fff" stroke-width="1.300"/><path d="M13.300 12.800l1.800-1.300v6.500" fill="none" stroke="#fff" stroke-width="1.400"/></svg>
</body>
</html>
